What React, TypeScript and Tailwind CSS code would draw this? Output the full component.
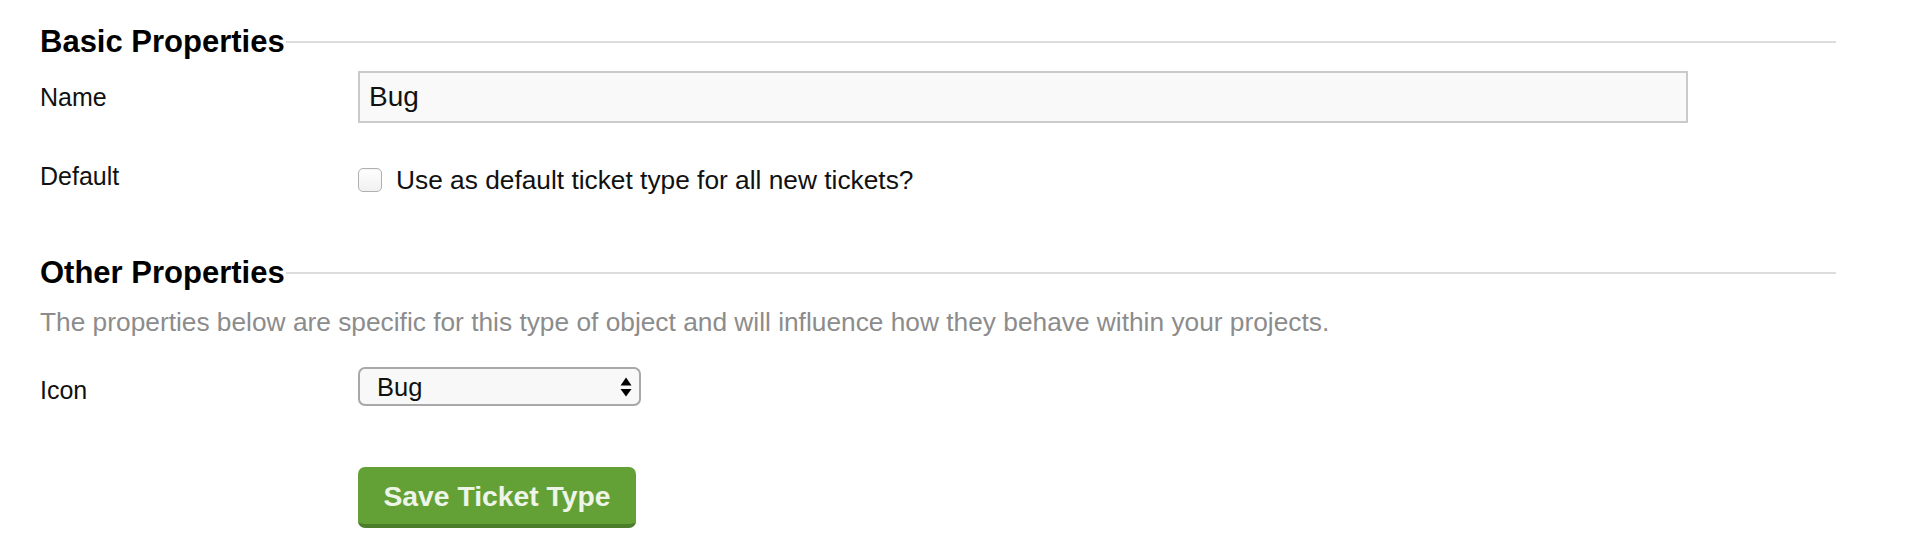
const SectionHeading = ({ title }: { title: string }) => (
  <div className="flex h-[36px] items-center">
    <h2 className="text-[31px] font-bold leading-[36px] text-black">{title}</h2>
    <div className="ml-[1px] h-[2px] flex-1 bg-[#dcdcdc]" />
  </div>
);

const SelectArrows = () => (
  <svg width="12" height="20" viewBox="0 0 12 20" className="text-black">
    <path d="M0.5 8.5 L6 0.5 L11.5 8.5 Z" fill="currentColor" />
    <path d="M0.5 12 L11.5 12 L6 19.5 Z" fill="currentColor" />
  </svg>
);

export default function App() {
  return (
    <div className="min-h-screen bg-white font-['Liberation_Sans',Arial,Helvetica,sans-serif] text-[#111]">
      <form className="pl-[40px] pr-[74px] pt-[24px]" onSubmit={(e) => e.preventDefault()}>
        {/* Basic properties */}
        <SectionHeading title="Basic Properties" />

        <div className="mt-[11px] flex items-center">
          <label className="w-[318px] text-[25px] leading-[30px]">Name</label>
          <input
            readOnly
            defaultValue="Bug"
            className="h-[52px] w-[1330px] border-2 border-[#cacaca] bg-[#f9f9f9] pl-[9px] text-[28px] text-[#111] outline-none"
          />
        </div>

        <div className="mt-[38px] flex items-start">
          <label className="w-[318px] text-[25px] leading-[30px]">Default</label>
          <div className="mt-[7px] flex h-[24px] items-center">
            <div className="h-[24px] w-[24px] rounded-[5px] border border-[#b0b0b0] bg-gradient-to-b from-white to-[#f0f0f0] shadow-[inset_0_1px_1px_rgba(0,0,0,0.05)]" />
            <span className="ml-[14px] text-[26.3px] leading-[24px]">
              Use as default ticket type for all new tickets?
            </span>
          </div>
        </div>

        {/* Other properties */}
        <div className="mt-[63px]">
          <SectionHeading title="Other Properties" />
        </div>
        <p className="mt-[16px] text-[26.3px] leading-[30px] text-[#8c8c8c]">
          The properties below are specific for this type of object and will influence how they behave within your projects.
        </p>

        <div className="mt-[30px] flex items-start">
          <label className="mt-[8px] w-[318px] text-[25px] leading-[30px]">Icon</label>
          <div className="flex h-[39px] w-[283px] items-center justify-between rounded-[7px] border-2 border-[#a8a8a8] bg-[#f8f8f8] pl-[17px] pr-[7px]">
            <span className="text-[25.5px] leading-[30px] text-[#111]">Bug</span>
            <SelectArrows />
          </div>
        </div>

        <div className="mt-[61px] pl-[318px]">
          <button
            type="submit"
            className="flex h-[61px] w-[278px] items-center justify-center rounded-[7px] border-b-4 border-[#4b7d2a] bg-[#63a137] text-[28.3px] font-bold leading-[32px] text-[#eef5e8]"
          >
            Save Ticket Type
          </button>
        </div>
      </form>
    </div>
  );
}
